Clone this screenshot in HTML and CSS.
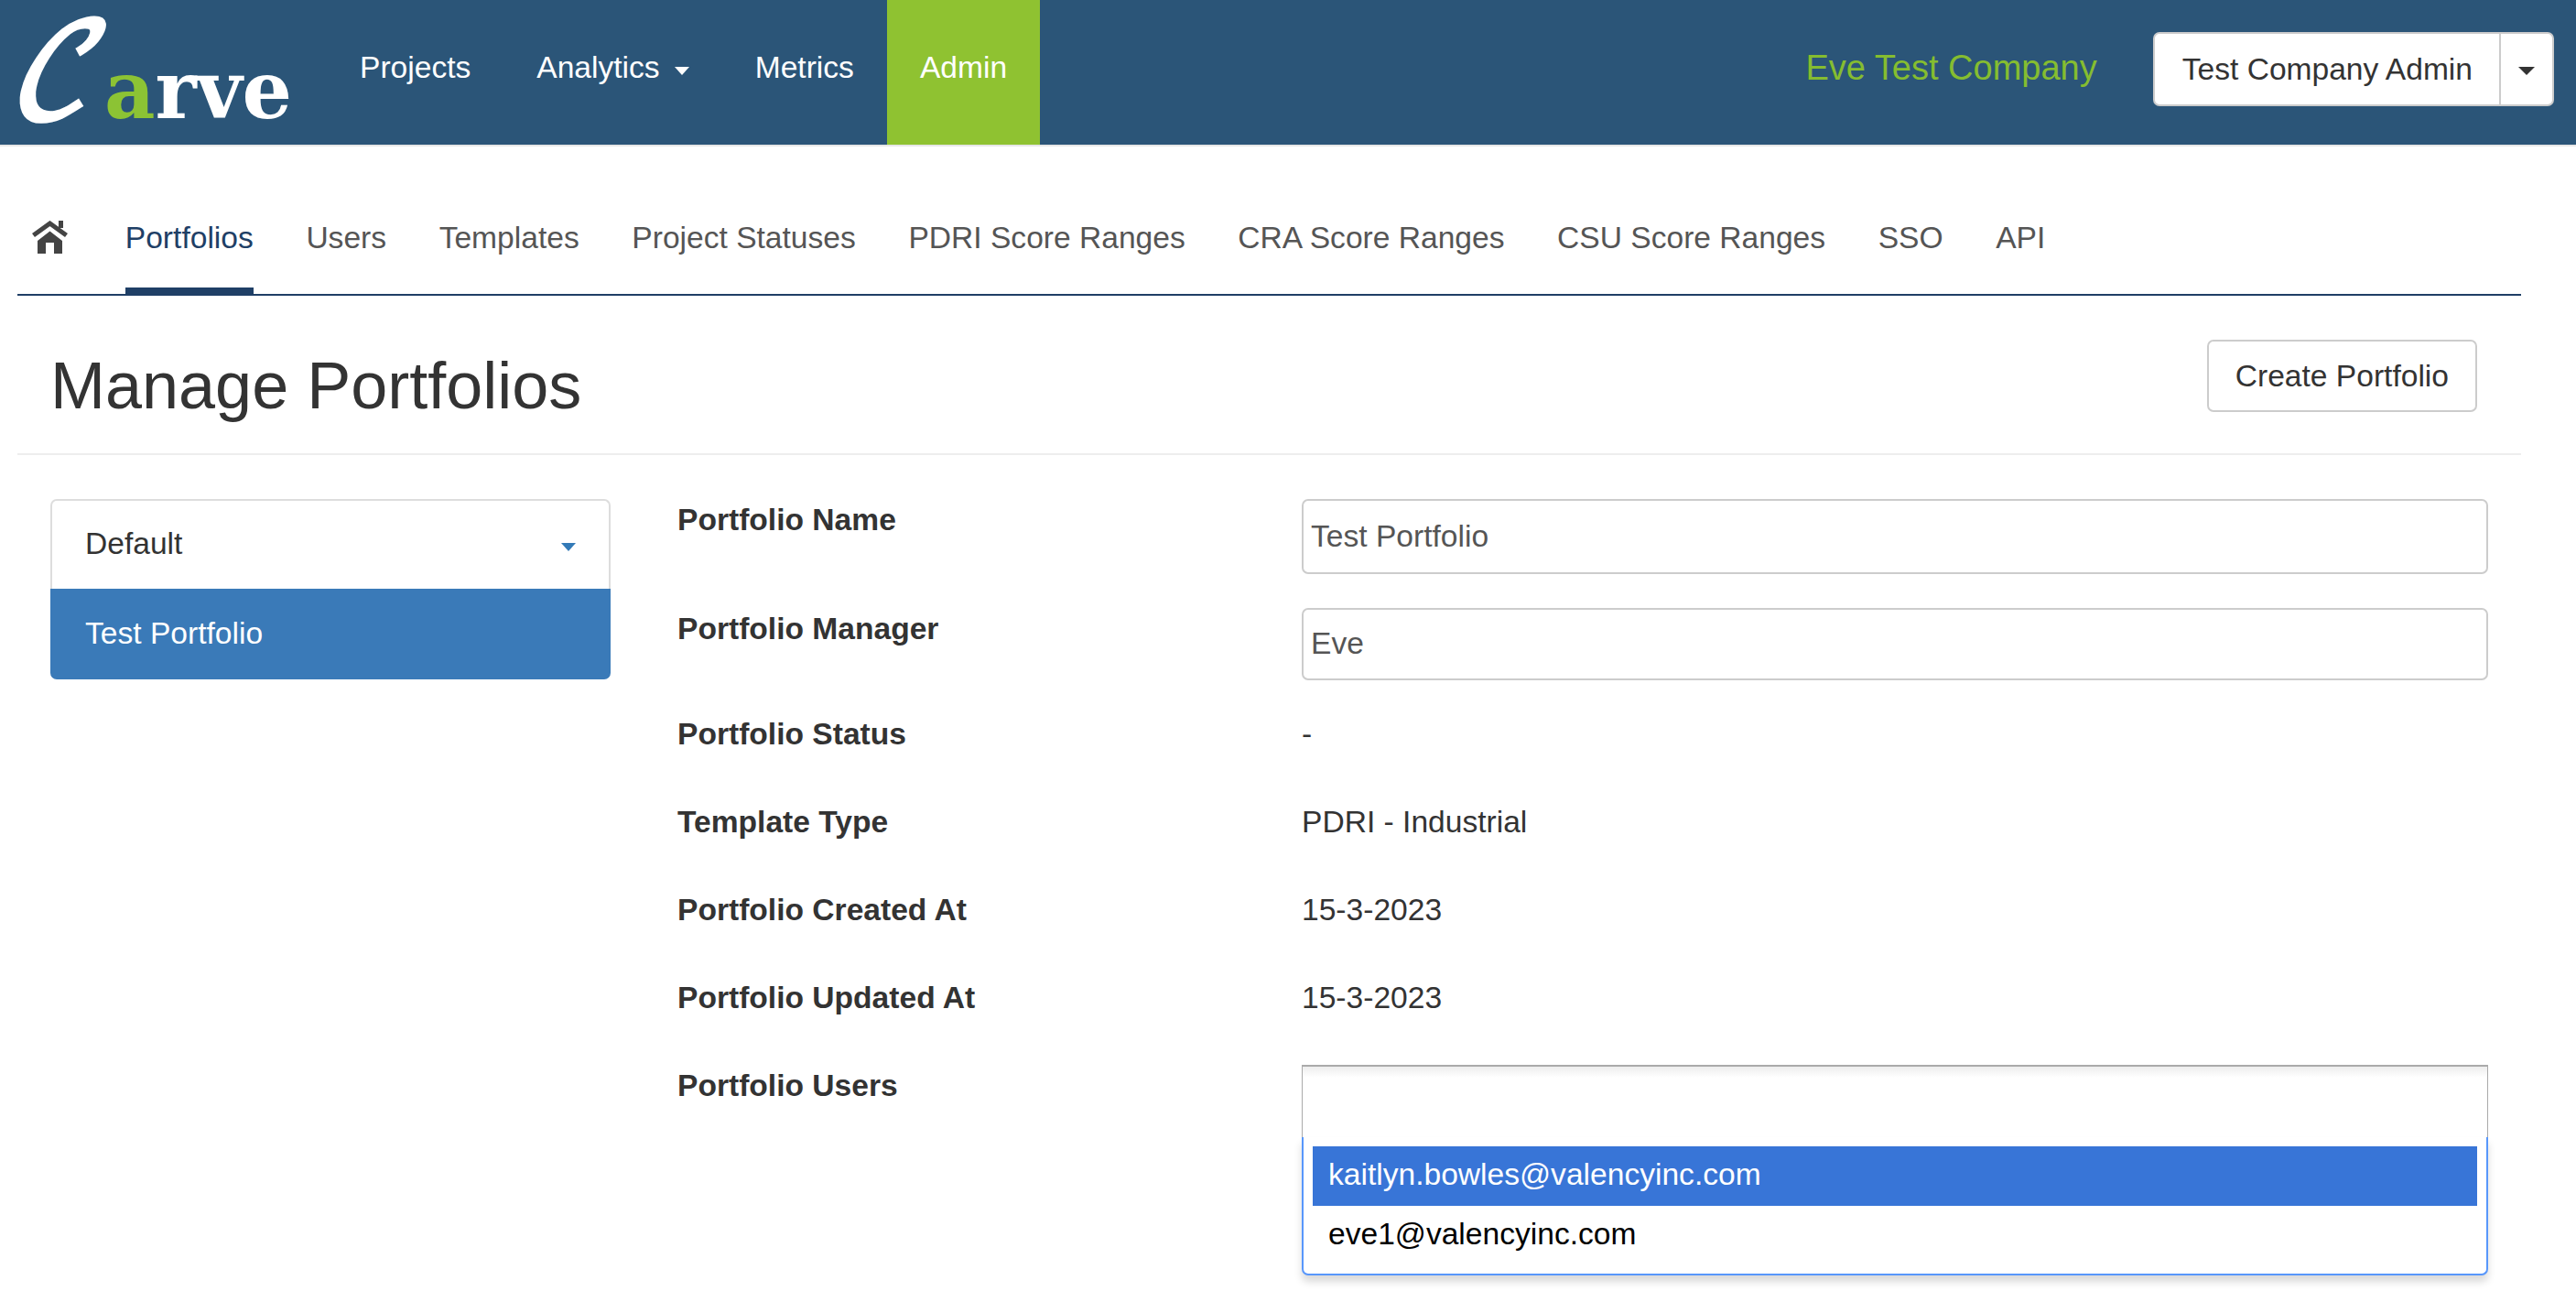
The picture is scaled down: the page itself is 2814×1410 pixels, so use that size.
FILE: index.html
```html
<!DOCTYPE html>
<html lang="en">
<head>
<meta charset="utf-8">
<title>Manage Portfolios</title>
<link rel="stylesheet" href="styles.css">
</head>
<body>
<header class="topbar">
  <a class="logo" href="#">
    <svg class="logo-svg" viewBox="0 0 320 150" width="320" height="150">
      <text class="logo-c" x="0" y="0" transform="translate(-6 124) scale(.78 .86)">𝒞</text>
      <text class="logo-rest" x="100" y="125" textLength="205" lengthAdjust="spacingAndGlyphs"><tspan class="logo-a">a</tspan>rve</text>
    </svg>
  </a>
  <nav class="mainnav">
    <a class="mainnav-item" href="#">Projects</a>
    <a class="mainnav-item" href="#">Analytics<span class="caret caret-white"></span></a>
    <a class="mainnav-item" href="#">Metrics</a>
    <a class="mainnav-item is-active" href="#">Admin</a>
  </nav>
  <div class="company">Eve Test Company</div>
  <div class="role-btn">
    <span class="role-label">Test Company Admin</span>
    <span class="role-toggle"><span class="caret caret-dark"></span></span>
  </div>
</header>

<main class="page">
  <nav class="tabs">
    <a class="tab tab-home" href="#" aria-label="Home">
      <svg class="home-icon" viewBox="0 0 39 36" width="39" height="36">
        <path class="home-roof" d="M1.5 16 19.5 3 37.5 16"/>
        <rect class="home-fill" x="29" y="0" width="5" height="8"/>
        <path class="home-fill" d="M6 22 19.5 11.5 33 22V36H24V24H15V36H6Z"/>
      </svg>
    </a>
    <a class="tab is-active" href="#">Portfolios</a>
    <a class="tab" href="#">Users</a>
    <a class="tab" href="#">Templates</a>
    <a class="tab" href="#">Project Statuses</a>
    <a class="tab" href="#">PDRI Score Ranges</a>
    <a class="tab" href="#">CRA Score Ranges</a>
    <a class="tab" href="#">CSU Score Ranges</a>
    <a class="tab" href="#">SSO</a>
    <a class="tab" href="#">API</a>
  </nav>

  <div class="title-row">
    <h1 class="title">Manage Portfolios</h1>
    <button class="btn-create" type="button">Create Portfolio</button>
  </div>

  <div class="content">
    <aside class="sidebar">
      <a class="side-item" href="#">Default<span class="caret caret-blue"></span></a>
      <a class="side-item is-active" href="#">Test Portfolio</a>
    </aside>

    <section class="details">
      <div class="field field-input">
        <label class="field-label">Portfolio Name</label>
        <input class="field-input-box" type="text" value="Test Portfolio">
      </div>
      <div class="field field-input field-input-second">
        <label class="field-label">Portfolio Manager</label>
        <input class="field-input-box field-input-box-short" type="text" value="Eve">
      </div>
      <div class="field field-text">
        <span class="field-label">Portfolio Status</span>
        <span class="field-value">-</span>
      </div>
      <div class="field field-text">
        <span class="field-label">Template Type</span>
        <span class="field-value">PDRI - Industrial</span>
      </div>
      <div class="field field-text">
        <span class="field-label">Portfolio Created At</span>
        <span class="field-value">15-3-2023</span>
      </div>
      <div class="field field-text">
        <span class="field-label">Portfolio Updated At</span>
        <span class="field-value">15-3-2023</span>
      </div>
      <div class="field">
        <span class="field-label">Portfolio Users</span>
        <div class="chooser">
          <div class="chooser-choices"></div>
          <ul class="chooser-drop">
            <li class="chooser-option is-highlighted">kaitlyn.bowles@valencyinc.com</li>
            <li class="chooser-option">eve1@valencyinc.com</li>
          </ul>
        </div>
      </div>
    </section>
  </div>
</main>
</body>
</html>
```

FILE: styles.css
```css
* { box-sizing: border-box; }
html, body { margin: 0; padding: 0; background: #fff; }
body {
  font-family: "Liberation Sans", Arial, sans-serif;
  font-size: 33.6px;
  line-height: 46px;
  color: #333;
  overflow: hidden;
  height: 1410px;
}
a { text-decoration: none; color: inherit; }

/* top bar */
.topbar {
  display: flex;
  align-items: flex-start;
  height: 160px;
  background: #2b5578;
  border-bottom: 2px solid #e7e7e7;
}
.logo { display: block; width: 357px; padding: 4px 0 0 14px; }
.logo-svg { display: block; overflow: visible; }
.logo-c {
  font-family: "DejaVu Math TeX Gyre", "DejaVu Serif", serif;
  font-size: 165px;
  font-style: italic;
  fill: #fff;
  stroke: #fff;
  stroke-width: 5px;
}
.logo-rest {
  font-family: "DejaVu Serif", serif;
  font-weight: 700;
  font-size: 87px;
  fill: #fff;
}
.logo-a { fill: #8cc334; }
.mainnav { display: flex; height: 158px; }
.mainnav-item { padding: 51px 36px 0; color: #fff; height: 158px; }
.mainnav-item.is-active { background: #8fc231; }
.caret { display: inline-block; width: 0; height: 0; border-style: solid; border-color: transparent; }
.caret-white { border-width: 9px 8px 0; border-top-color: #fff; margin-left: 16px; vertical-align: 3px; }
.company { margin-left: auto; padding-top: 51px; font-size: 38px; color: #85bd30; }
.role-btn {
  display: flex;
  height: 81px;
  margin: 35px 24px 0 61px;
  background: #fff;
  border: 2px solid #ccc;
  border-radius: 7px;
  color: #333;
}
.role-label { padding: 16px 29px 0 30px; }
.role-toggle { display: flex; align-items: center; justify-content: center; width: 58px; border-left: 2px solid #ccc; }
.caret-dark { border-width: 9px 9px 0; border-top-color: #333; margin-top: 3px; }

/* tabs */
.page { padding: 0 60px 0 19px; }
.tabs {
  display: flex;
  gap: 0;
  height: 163px;
  padding-top: 54px;
  border-bottom: 2px solid #1f3f66;
}
.tab {
  display: block;
  height: 109px;
  padding: 23px 28.8px 0;
  color: #555;
}
.tab.is-active { color: #1f3f66; position: relative; }
.tab.is-active::after {
  content: "";
  position: absolute;
  left: 28.8px;
  right: 28.8px;
  bottom: 0;
  height: 9px;
  background: #1f3f66;
}
.tab-home { padding: 27px 34px 0 16px; }
.home-icon { display: block; }
.home-roof { fill: none; stroke: #444; stroke-width: 5; }
.home-fill { fill: #444; }

/* title */
.title-row {
  display: flex;
  justify-content: space-between;
  align-items: flex-start;
  height: 174px;
  padding: 48px 48px 0 36px;
  border-bottom: 2px solid #eee;
}
.title {
  margin: 11px 0 0;
  font-size: 72px;
  line-height: 79px;
  font-weight: 400;
}
.btn-create {
  height: 79px;
  padding: 0 29px;
  background: #fff;
  border: 2px solid #ccc;
  border-radius: 7px;
  font: inherit;
  color: #333;
}

/* content */
.content { display: flex; padding-top: 48px; }
.sidebar { width: 612px; margin: 0 73px 0 36px; flex: none; }
.side-item {
  display: block;
  height: 98px;
  padding: 24px 36px 0 36px;
  background: #fff;
  border: 2px solid #ddd;
  border-bottom: 0;
  border-radius: 7px 7px 0 0;
  position: relative;
}
.side-item.is-active {
  height: 99px;
  color: #fff;
  background: #3a7ab8;
  border: 0;
  border-radius: 0 0 7px 7px;
  padding: 26px 36px 0 38px;
}
.caret-blue { position: absolute; right: 36px; top: 46px; border-width: 9px 8.5px 0; border-top-color: #337ab7; }

.details { flex: none; width: 1978px; }
.field { display: grid; grid-template-columns: 682px 1296px; }
.field-input { margin-bottom: 37px; }
.field-input-second { margin-bottom: 36px; }
.field-text { margin-bottom: 50px; }
.field-label { font-weight: 700; display: block; }
.field-value { display: block; }
.field-input-box {
  width: 100%;
  height: 82px;
  padding: 0 8px;
  background: #fff;
  border: 2px solid #ccc;
  border-radius: 7px;
  font: inherit;
  color: #555;
}
.field-input-box-short { height: 79px; padding-bottom: 2px; }

/* multi select */
.chooser { position: relative; width: 1296px; height: 230px; }
.chooser-choices {
  height: 79px;
  background: linear-gradient(#eee 1%, #fff 15%);
  border: 1px solid #aaa;
  border-top-width: 2px;
  border-bottom: 0;
}
.chooser-drop {
  position: absolute;
  left: 0;
  right: 0;
  top: 79px;
  height: 151px;
  margin: 0;
  padding: 10px 10px 0;
  list-style: none;
  background: #fff;
  border: 2px solid #5897fb;
  border-top: 0;
  border-radius: 0 0 7px 7px;
  box-shadow: 0 7px 9px rgba(0, 0, 0, .15);
  color: #000;
}
.chooser-option { height: 65px; padding: 8px 17px 0; }
.chooser-option.is-highlighted { color: #fff; background: #3875d7; }
```
